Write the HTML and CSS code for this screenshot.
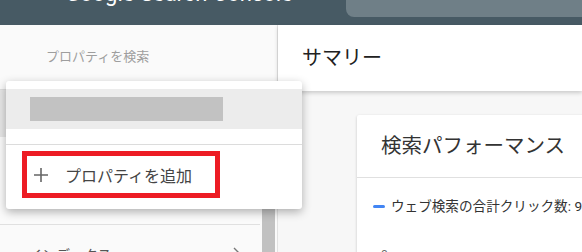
FILE: index.html
```html
<!DOCTYPE html>
<html lang="ja">
<head>
  <meta charset="UTF-8">
  <title>Google Search Console</title>
  <link rel="stylesheet" href="styles.css">
</head>
<body>

  <!-- Top bar -->
  <div class="topbar">
    <div class="brand">Google Search Console</div>
    <div class="search-box"></div>
  </div>

  <div class="layout">
    <!-- Sidebar -->
    <div class="sidebar">
      <div class="sidebar-search">プロパティを検索</div>
      <div class="sidebar-current"></div>
      <div class="sidebar-gap"></div>
      <div class="sidebar-item">
        <span>インデックス</span>
        <svg class="chevron" width="8" height="10" viewBox="0 0 8 10"><path d="M1 1 L5 5 L1 9" fill="none" stroke="#777" stroke-width="1.4"/></svg>
      </div>
      <div class="scrollbar"></div>
    </div>

    <!-- Main content -->
    <div class="main">
      <div class="page-header">サマリー</div>
      <div class="content">
        <div class="card">
          <div class="card-title">検索パフォーマンス</div>
          <div class="card-body">
            <div class="legend">
              <span class="legend-swatch"></span>
              <span>ウェブ検索の合計クリック数: 9</span>
            </div>
            <div class="axis-label">0</div>
          </div>
        </div>
      </div>
    </div>
  </div>

  <!-- Property dropdown menu (open) -->
  <div class="property-menu">
    <div class="menu-current">
      <div class="placeholder"></div>
    </div>
    <div class="menu-divider"></div>
    <div class="menu-add">
      <div class="add-highlight">
        <svg class="plus" width="14" height="14" viewBox="0 0 14 14"><path d="M7 0 V14 M0 7 H14" stroke="#666" stroke-width="1.6"/></svg>
        <span>プロパティを追加</span>
      </div>
    </div>
  </div>

</body>
</html>
```

FILE: styles.css
```css
html, body {
  margin: 0;
  padding: 0;
  width: 582px;
  height: 252px;
  overflow: hidden;
  font-family: Roboto, "Noto Sans CJK JP", sans-serif;
  background: #f7f7f7;
  position: relative;
}
.topbar {
  height: 25px;
  background: #475a64;
  display: flex;
  align-items: flex-start;
  overflow: hidden;
}
.brand {
  margin-left: 65px;
  margin-top: -19px;
  font-size: 22px;
  line-height: 26px;
  color: #ffffff;
  white-space: nowrap;
  width: 281px;
}
.search-box {
  flex: 1;
  height: 17px;
  background: #6f7f87;
  border-radius: 0 0 0 8px;
}
.layout {
  display: flex;
  height: 227px;
}
.sidebar {
  width: 277px;
  background: #fafafa;
  border-right: 1px solid #e2e2e2;
  position: relative;
  flex-shrink: 0;
}
.sidebar-search {
  padding-left: 46px;
  height: 64px;
  line-height: 64px;
  font-size: 13px;
  color: #9e9e9e;
}
.sidebar-current {
  border-top: 1px solid #dedede;
  height: 47px;
  background: #e6e6e6;
  margin-right: 17px;
}
.sidebar-gap {
  height: 87px;
  border-bottom: 1px solid #e0e0e0;
  margin-right: 17px;
}
.sidebar-item {
  display: flex;
  align-items: flex-start;
  justify-content: space-between;
  padding: 20px 36px 0 28px;
  font-size: 14px;
  line-height: 20px;
  color: #555;
}
.chevron {
  margin-top: 2px;
}
.scrollbar {
  position: absolute;
  left: 262px;
  top: 70px;
  width: 13px;
  height: 200px;
  background: #c1c1c1;
}
.main {
  flex: 1;
  display: flex;
  flex-direction: column;
  min-width: 0;
}
.page-header {
  height: 71px;
  background: #ffffff;
  box-shadow: 0 2px 4px rgba(0, 0, 0, 0.18);
  padding-left: 24px;
  font-size: 20px;
  line-height: 66px;
  color: #212121;
  position: relative;
  z-index: 2;
}
.content {
  padding: 24px 0 0 79px;
}
.card {
  width: 400px;
  height: 200px;
  background: #ffffff;
  box-shadow: 0 1px 3px rgba(0, 0, 0, 0.2);
  border-radius: 2px;
}
.card-title {
  height: 62px;
  line-height: 62px;
  padding-left: 24px;
  font-size: 20.5px;
  color: #333;
  border-bottom: 1px solid #e0e0e0;
  white-space: nowrap;
}
.card-body {
  padding: 18px 0 0 16px;
}
.legend {
  display: flex;
  align-items: center;
  gap: 6px;
  font-size: 13.6px;
  line-height: 20px;
  color: #333;
  white-space: nowrap;
}
.legend-swatch {
  width: 12px;
  height: 3px;
  border-radius: 2px;
  background: #4285f4;
}
.axis-label {
  margin: 31px 0 0 8px;
  font-size: 12px;
  line-height: 16px;
  color: #666;
}
.property-menu {
  position: absolute;
  left: 6px;
  top: 81px;
  width: 296px;
  height: 128px;
  background: #ffffff;
  border-radius: 3px;
  box-shadow: 0 3px 10px rgba(0, 0, 0, 0.3);
  z-index: 10;
  display: flex;
  flex-direction: column;
}
.menu-current {
  margin-top: 8px;
  height: 40px;
  background: #ececec;
  display: flex;
  align-items: center;
  padding-left: 24px;
}
.placeholder {
  width: 193px;
  height: 24px;
  background: #c2c2c2;
}
.menu-divider {
  margin-top: 15px;
  height: 1px;
  background: #dcdcdc;
}
.menu-add {
  padding: 6px 0 0 16px;
}
.add-highlight {
  width: 181px;
  height: 37px;
  border: 5px solid #ed1c24;
  display: flex;
  align-items: center;
  padding-left: 7px;
  gap: 17px;
  font-size: 16px;
  color: #444;
  white-space: nowrap;
}
```
